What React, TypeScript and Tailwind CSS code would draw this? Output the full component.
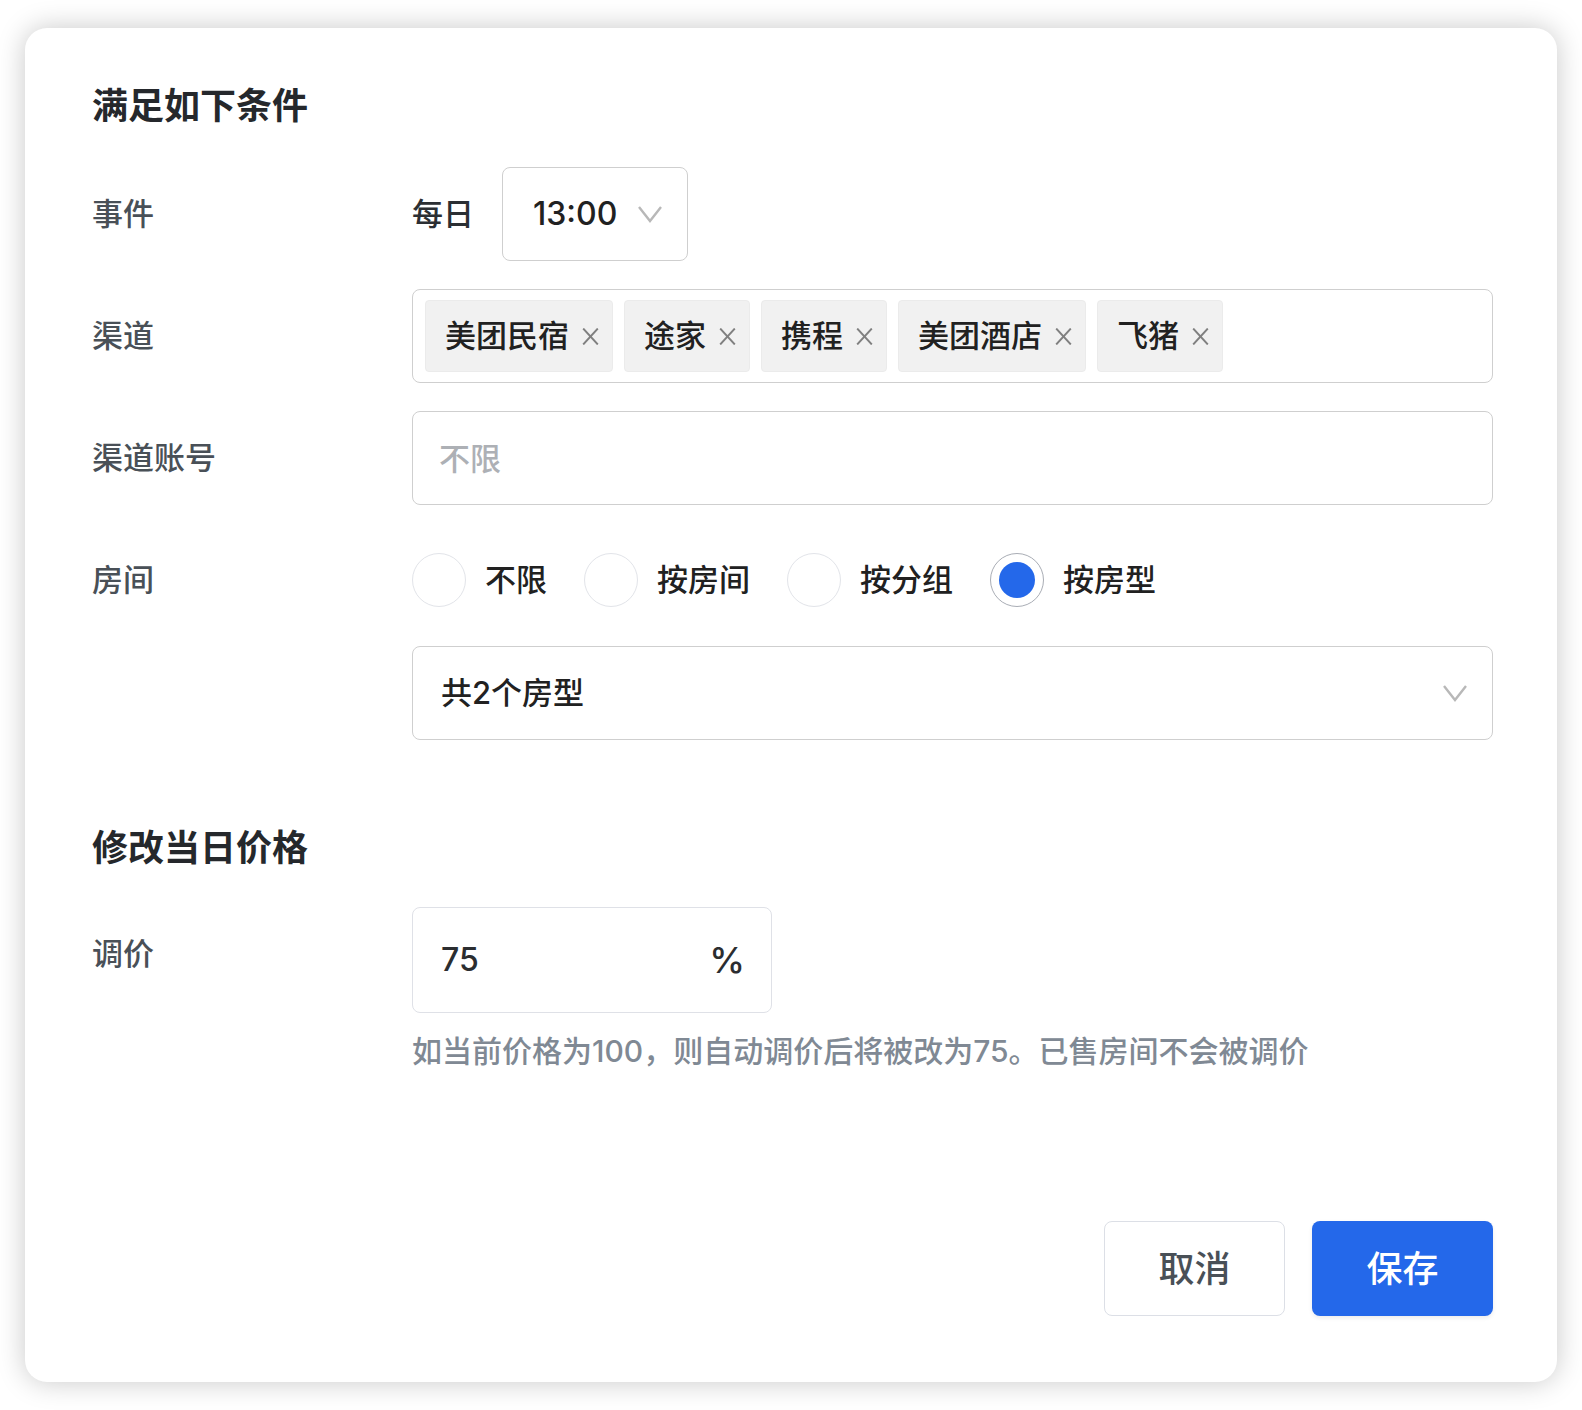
import React, { useState } from "react";

type FormRowProps = {
  label: string;
  htmlFor?: string;
  children: React.ReactNode;
};

type TagProps = {
  name: string;
  onRemove: () => void;
};

type SelectBoxProps = {
  id: string;
  options: string[];
  className: string;
  selectClassName: string;
};

const FormRow: React.FC<FormRowProps> = ({ label, htmlFor, children }) => {
  return (
    <div className="flex items-start">
      <label
        htmlFor={htmlFor}
        className="flex h-[94px] w-80 shrink-0 items-center text-[31px] text-[#495057]">
        {label}
      </label>
      <div className="min-w-0 flex-1">{children}</div>
    </div>
  );
};

const SelectBox: React.FC<SelectBoxProps> = ({
  id,
  options,
  className,
  selectClassName,
}) => {
  return (
    <div className={`grid items-center ${className}`}>
      <select
        id={id}
        className={`col-start-1 row-start-1 h-[94px] w-full appearance-none rounded-lg border border-[#cfcfcf] bg-white text-[#212121] ${selectClassName}`}>
        {options.map((option) => (
          <option key={option}>{option}</option>
        ))}
      </select>
      <svg
        viewBox="0 0 24 17"
        className="pointer-events-none col-start-1 row-start-1 mr-[26px] h-[17px] w-6 justify-self-end"
        fill="none"
        stroke="#b8b8b8"
        strokeWidth="2.4">
        <path d="M1 1 L12 15 L23 1" />
      </svg>
    </div>
  );
};

const Tag: React.FC<TagProps> = ({ name, onRemove }) => {
  return (
    <span className="flex h-[72px] items-center gap-[13px] rounded border border-[#ebebeb] bg-[#f1f1f1] pr-[13px] pl-[19px] text-[31px] text-[#212121]">
      {name}
      <button type="button" aria-label={`移除${name}`} onClick={onRemove}>
        <svg
          viewBox="0 0 17 17"
          className="size-[17px]"
          fill="none"
          stroke="#808080"
          strokeWidth="1.9">
          <path d="M1.2 0.5 L15.8 16.5 M15.8 0.5 L1.2 16.5" />
        </svg>
      </button>
    </span>
  );
};

const scopes = ["不限", "按房间", "按分组", "按房型"];

const App: React.FC = () => {
  const [channels, setChannels] = useState([
    "美团民宿",
    "途家",
    "携程",
    "美团酒店",
    "飞猪",
  ]);
  const [scope, setScope] = useState("按房型");
  const [percent, setPercent] = useState("75");

  return (
    <div
      lang="zh-CN"
      className="bg-white px-[25px] py-7 font-['Inter','Noto_Sans_CJK_SC',sans-serif] font-medium">
      <form
        onSubmit={(e) => e.preventDefault()}
        className="rounded-[22px] bg-white pt-[53px] pr-16 pb-[66px] pl-[67px] shadow-[0_0_28px_rgba(0,0,0,0.22)]">
        <h2 className="text-[36px] leading-[50px] font-bold text-[#25282c]">
          满足如下条件
        </h2>

        <div className="mt-9 flex flex-col gap-7">
          <FormRow label="事件" htmlFor="time">
            <div className="flex items-center gap-7">
              <span className="text-[31px] text-[#2b2f33]">每日</span>
              <SelectBox
                id="time"
                options={["13:00", "14:00", "15:00"]}
                className="w-[186px]"
                selectClassName="pl-[30px] text-[32px]"
              />
            </div>
          </FormRow>

          <FormRow label="渠道" htmlFor="channel">
            <div className="flex h-[94px] items-center gap-[11px] rounded-lg border border-[#cfcfcf] px-3">
              {channels.map((name) => (
                <Tag
                  key={name}
                  name={name}
                  onRemove={() =>
                    setChannels(channels.filter((item) => item !== name))
                  }
                />
              ))}
              <input
                id="channel"
                type="text"
                className="h-full min-w-0 flex-1 text-[31px] outline-none"
              />
            </div>
          </FormRow>

          <FormRow label="渠道账号" htmlFor="account">
            <input
              id="account"
              type="text"
              placeholder="不限"
              className="h-[94px] w-full rounded-lg border border-[#cfcfcf] px-[26px] text-[31px] text-[#212121] placeholder:text-[#adb0b5]"
            />
          </FormRow>

          <FormRow label="房间" htmlFor="room-types">
            <div className="flex h-[94px] items-center gap-[37px]">
              {scopes.map((item) => (
                <label
                  key={item}
                  className="flex items-center gap-[19px] text-[31px] text-[#212121]">
                  <input
                    type="radio"
                    name="scope"
                    checked={scope === item}
                    onChange={() => setScope(item)}
                    className="grid size-[54px] appearance-none place-items-center rounded-full border border-[#e2e4e9] before:size-9 before:rounded-full checked:border-[#a9adb5] checked:before:bg-[#2468ea]"
                  />
                  {item}
                </label>
              ))}
            </div>
            <SelectBox
              id="room-types"
              options={["共2个房型"]}
              className="mt-[19px] w-full"
              selectClassName="pl-7 text-[31px]"
            />
          </FormRow>
        </div>

        <h2 className="mt-[83px] text-[36px] leading-[50px] font-bold text-[#25282c]">
          修改当日价格
        </h2>

        <div className="mt-[34px]">
          <FormRow label="调价" htmlFor="percent">
            <div className="flex h-[106px] w-[360px] items-center justify-between rounded-lg border border-[#dfe1e7] pr-[26px] pl-7 text-[#2b2d30]">
              <input
                id="percent"
                type="text"
                value={percent}
                onChange={(e) => setPercent(e.target.value)}
                className="w-40 text-[32px] outline-none"
              />
              <span className="text-[36px]">%</span>
            </div>
            <p className="mt-[18px] text-[30px] leading-10 text-[#808994]">
              如当前价格为100，则自动调价后将被改为{percent}。已售房间不会被调价
            </p>
          </FormRow>
        </div>

        <div className="mt-[150px] flex justify-end gap-[27px]">
          <button
            type="button"
            className="h-[95px] w-[181px] rounded-lg border border-[#dcdfe6] bg-white text-[36px] text-[#495057]">
            取消
          </button>
          <button
            type="submit"
            className="h-[95px] w-[181px] rounded-lg bg-[#2468ea] text-[36px] text-white shadow-[0_2px_4px_rgba(0,0,0,0.08)]">
            保存
          </button>
        </div>
      </form>
    </div>
  );
};

export default App;
